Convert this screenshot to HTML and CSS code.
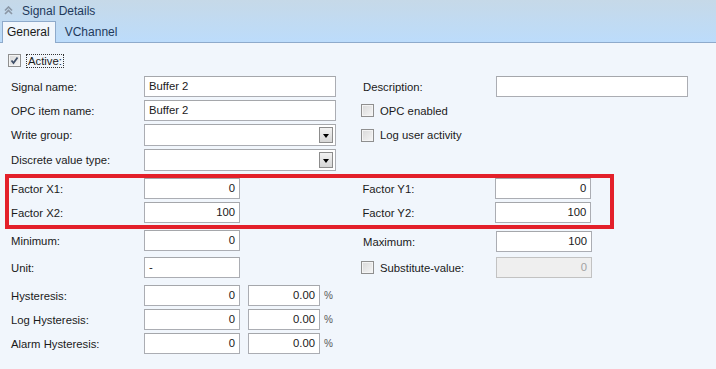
FILE: index.html
```html
<!DOCTYPE html>
<html lang="en">
    <head>
        <meta charset="utf-8">
        <title>Signal Details</title>
        <link rel="stylesheet" href="styles.css">
    </head>
    <body>
        <div class="panel">
            <div class="panel-head">
                <div class="title">
                    <svg class="collapse" width="9" height="9" viewBox="0 0 9 9">
                        <path d="M1 4.5 L4.5 1 L8 4.5 M1 8 L4.5 4.5 L8 8" fill="none" stroke="#8a96a4" stroke-width="1.6"/>
                    </svg>
                    <span>Signal Details</span>
                </div>
                <div class="tabs">
                    <div class="tab active">General</div>
                    <div class="tab">VChannel</div>
                </div>
            </div>

            <div class="content">
                <div class="check-line">
                    <span class="cb checked">
                        <svg width="9" height="9" viewBox="0 0 9 9">
                            <path d="M1.5 4.5 L3.5 7 L7.5 1.5" fill="none" stroke="#3f4f68" stroke-width="1.8"/>
                        </svg>
                    </span><span class="focus">Active:</span>
                </div>

                <div class="group top-group">
                    <div class="row">
                        <div class="cell"><span class="lbl">Signal name:</span><div class="field wide">Buffer 2</div></div>
                        <div class="cell"><span class="lbl">Description:</span><div class="field wide"></div></div>
                    </div>
                    <div class="row">
                        <div class="cell"><span class="lbl">OPC item name:</span><div class="field wide">Buffer 2</div></div>
                        <div class="cell"><span class="cb"></span><span class="cb-text">OPC enabled</span></div>
                    </div>
                    <div class="row combo-row">
                        <div class="cell"><span class="lbl">Write group:</span><div class="field wide combo"><span class="drop"></span></div></div>
                        <div class="cell"><span class="cb"></span><span class="cb-text">Log user activity</span></div>
                    </div>
                    <div class="row combo-row">
                        <div class="cell"><span class="lbl">Discrete value type:</span><div class="field wide combo"><span class="drop"></span></div></div>
                        <div class="cell"></div>
                    </div>
                </div>

                <div class="highlight">
                    <div class="row">
                        <div class="cell"><span class="lbl">Factor X1:</span><div class="field num">0</div></div>
                        <div class="cell"><span class="lbl">Factor Y1:</span><div class="field num">0</div></div>
                    </div>
                    <div class="row">
                        <div class="cell"><span class="lbl">Factor X2:</span><div class="field num">100</div></div>
                        <div class="cell"><span class="lbl">Factor Y2:</span><div class="field num">100</div></div>
                    </div>
                </div>

                <div class="group limits">
                    <div class="row">
                        <div class="cell"><span class="lbl">Minimum:</span><div class="field num">0</div></div>
                        <div class="cell"><span class="lbl">Maximum:</span><div class="field num">100</div></div>
                    </div>
                    <div class="row">
                        <div class="cell"><span class="lbl">Unit:</span><div class="field num left">-</div></div>
                        <div class="cell"><span class="cb"></span><span class="cb-text sub">Substitute-value:</span><div class="field num disabled">0</div></div>
                    </div>
                </div>

                <div class="group hyst">
                    <div class="row">
                        <div class="cell"><span class="lbl">Hysteresis:</span><div class="field num">0</div><div class="field pct">0.00</div><span class="unit">%</span></div>
                    </div>
                    <div class="row">
                        <div class="cell"><span class="lbl">Log Hysteresis:</span><div class="field num">0</div><div class="field pct">0.00</div><span class="unit">%</span></div>
                    </div>
                    <div class="row">
                        <div class="cell"><span class="lbl">Alarm Hysteresis:</span><div class="field num">0</div><div class="field pct">0.00</div><span class="unit">%</span></div>
                    </div>
                </div>
            </div>
        </div>
    </body>
</html>
```

FILE: styles.css
```css
html, body {
    margin: 0;
    padding: 0;
}

body {
    width: 716px;
    height: 369px;
    overflow: hidden;
    background: #f1f6fc;
    font-family: "Liberation Sans", Arial, sans-serif;
    font-size: 11.3px;
    color: #1a1a1a;
}

.panel-head {
    height: 42px;
    background: linear-gradient(#c6d9e8, #bcdcfb);
    border-bottom: 1px solid #8eaacb;
    display: flex;
    flex-direction: column;
}

.title {
    height: 21px;
    display: flex;
    align-items: center;
    padding-left: 4px;
    font-size: 12px;
    color: #1e395b;
}

.title .collapse {
    margin-right: 9px;
}

.tabs {
    display: flex;
    align-items: flex-end;
    height: 21px;
    padding-left: 2px;
    font-size: 12px;
}

.tab {
    height: 20px;
    line-height: 20px;
    padding: 0 7px 0 9px;
    color: #1e395b;
}

.tab.active {
    background: #f1f6fc;
    border: 1px solid #8eaacb;
    border-bottom: none;
    height: 21px;
    margin-bottom: -1px;
    padding: 0 5px 0 4px;
    color: #1a1a1a;
}

.content {
    padding: 11px 0 0 0;
}

.check-line {
    display: flex;
    align-items: center;
    height: 13px;
    padding-left: 8px;
}

.cb {
    width: 11px;
    height: 11px;
    border: 1px solid #8f8f8f;
    background: linear-gradient(135deg, #d8d8d8, #f6f6f6);
    box-shadow: inset 0 0 0 1px #f4f4f4;
    flex: none;
    display: flex;
    align-items: center;
    justify-content: center;
}

.focus {
    margin-left: 5px;
    padding: 0 1px;
    border: 1px dotted #333;
    line-height: 12px;
}

.group, .highlight {
    display: flex;
    flex-direction: column;
    gap: 3px;
}

.top-group {
    margin-top: 9px;
}

.row {
    display: flex;
    height: 21px;
    padding-left: 11px;
}

.combo-row {
    height: 22px;
}

.cell {
    width: 352px;
    display: flex;
    align-items: center;
}

.lbl {
    width: 133px;
    flex: none;
}

.field {
    box-sizing: border-box;
    height: 21px;
    line-height: 19px;
    background: #fff;
    border: 1px solid #abadb3;
    border-top-color: #a5a7ab;
    padding: 0 4px;
    flex: none;
}

.combo-row .field {
    height: 22px;
    line-height: 20px;
}

.wide {
    width: 192px;
}

.num {
    width: 96px;
    text-align: right;
}

.num.left {
    text-align: left;
}

.pct {
    width: 72px;
    text-align: right;
    margin-left: 8px;
}

.unit {
    margin-left: 4px;
    color: #555;
    font-size: 10px;
}

.combo {
    position: relative;
}

.drop {
    position: absolute;
    right: 2px;
    top: 2px;
    width: 14px;
    height: 16px;
    box-sizing: border-box;
    border: 1px solid #8c8c8c;
    background: linear-gradient(#f2f2f2, #d6d6d6);
}

.drop::after {
    content: '';
    position: absolute;
    left: 3px;
    top: 6px;
    border-left: 3.5px solid transparent;
    border-right: 3.5px solid transparent;
    border-top: 4px solid #000;
}

.cell .cb {
    margin-left: -2px;
}

.cb-text {
    margin-left: 6px;
}

.cb-text.sub {
    width: 116px;
}

.disabled {
    background: #efefef;
    border-color: #c2c2c2;
    color: #a3a3a3;
}

.highlight {
    margin: 3px 102px 0 5px;
    border: 4px solid #e3202a;
    padding: 0 0 2px 0;
}

.highlight .row {
    padding-left: 2px;
}

.highlight .cell:last-child {
    width: 248px;
}

.limits {
    margin-top: 1px;
    gap: 6px;
}

.limits .row:first-child .cell:last-child {
    padding-top: 2px;
}

.hyst {
    margin-top: 7px;
}
```
